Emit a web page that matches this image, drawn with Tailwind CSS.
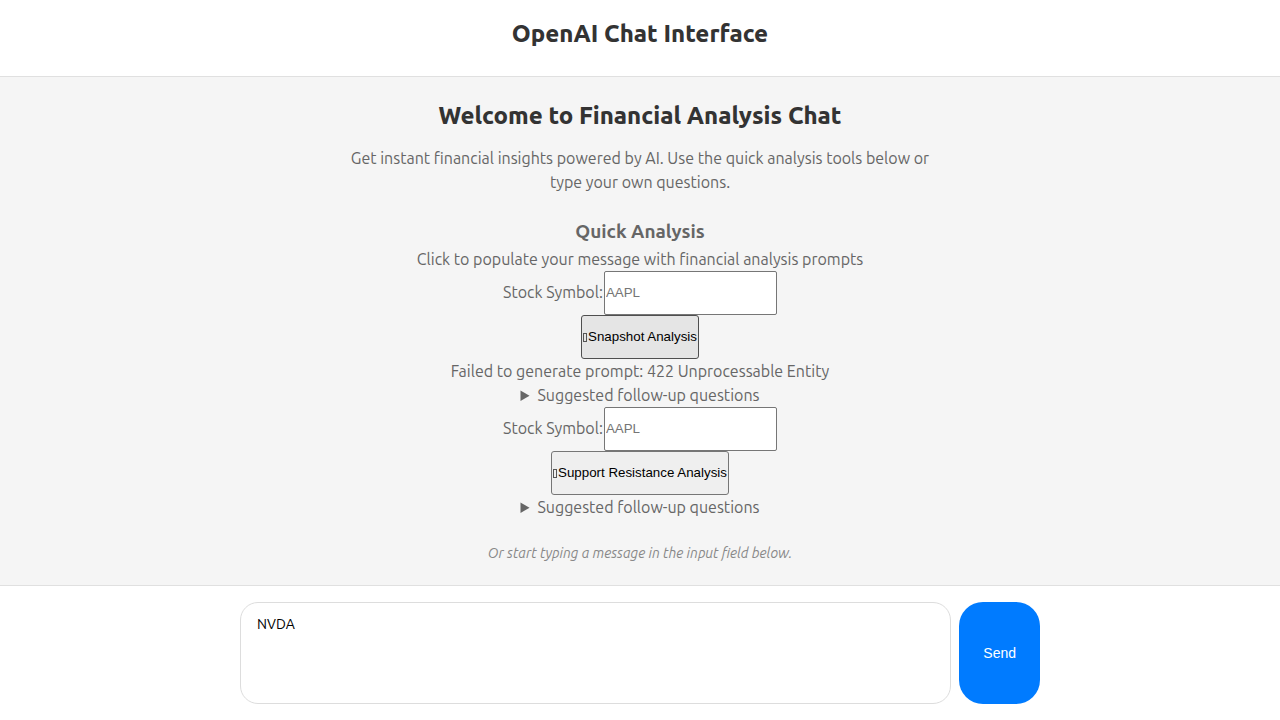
<!DOCTYPE html>
<html lang="en">
<head>
<meta charset="utf-8">
<meta name="viewport" content="width=device-width, initial-scale=1">
<title>OpenAI Chat Interface</title>
<script src="https://cdn.jsdelivr.net/npm/@tailwindcss/browser@4"></script>
</head>
<body class="flex min-h-screen flex-col bg-[#f5f5f5] font-[Ubuntu,'Noto_Sans',sans-serif] text-base text-[#666]">
  <header class="border-b border-[#e0e0e0] bg-white px-4 pt-4 pb-6 text-center">
    <h1 class="text-2xl/9 font-extrabold text-[#333]">OpenAI Chat Interface</h1>
  </header>

  <main class="flex flex-1 flex-col items-center px-4 pt-[21px] pb-5 text-center">
    <h2 class="text-2xl/9 font-extrabold text-[#333]">Welcome to Financial Analysis Chat</h2>
    <p class="mt-3 max-w-[600px]">Get instant financial insights powered by AI. Use the quick analysis tools below or type your own questions.</p>

    <section class="mt-6 flex flex-col items-center">
      <h3 class="pb-0.5 text-[19px]/[27px] font-bold">Quick Analysis</h3>
      <p>Click to populate your message with financial analysis prompts</p>

      <div class="flex items-center">
        <label for="snapshot-symbol" class="pr-px pb-0.5">Stock Symbol:</label>
        <input id="snapshot-symbol" type="text" placeholder="AAPL" class="h-11 w-[173px] rounded-[2px] border border-[#767676] bg-white px-px pb-0.5 font-['Liberation_Sans',sans-serif] text-[length:10pt] text-black placeholder:text-[#757575]">
      </div>
      <button type="button" class="flex h-11 items-center rounded-[3px] border border-[#4f4f4f] bg-[#e5e5e5] px-px font-['Liberation_Sans',sans-serif] text-[length:10pt] text-black">
        <span aria-hidden="true" class="mr-px h-[9px] w-1 border border-[#555]"></span>Snapshot Analysis
      </button>
      <p role="alert">Failed to generate prompt: 422 Unprocessable Entity</p>
      <details>
        <summary>Suggested follow-up questions</summary>
      </details>

      <div class="flex items-center">
        <label for="support-symbol" class="pr-px pb-0.5">Stock Symbol:</label>
        <input id="support-symbol" type="text" placeholder="AAPL" class="h-11 w-[173px] rounded-[2px] border border-[#767676] bg-white px-px pb-0.5 font-['Liberation_Sans',sans-serif] text-[length:10pt] text-black placeholder:text-[#757575]">
      </div>
      <button type="button" class="flex h-11 items-center rounded-[3px] border border-[#767676] bg-[#efefef] px-px font-['Liberation_Sans',sans-serif] text-[length:10pt] text-black">
        <span aria-hidden="true" class="mr-px h-[9px] w-1 border border-[#555]"></span>Support Resistance Analysis
      </button>
      <details>
        <summary>Suggested follow-up questions</summary>
      </details>
    </section>

    <p class="mt-6 text-[14px]/[21px] text-[#888] italic">Or start typing a message in the input field below.</p>
  </main>

  <footer class="border-t border-[#e0e0e0] bg-white p-4">
    <form class="mx-auto flex max-w-[800px] gap-2">
      <textarea aria-label="Message" class="h-[102px] min-w-0 flex-1 resize-none rounded-[18px] border border-[#ddd] bg-white px-4 py-[11px] text-[14px]/[21px] text-black">NVDA</textarea>
      <button type="button" class="rounded-3xl bg-[#007bff] px-6 font-['Liberation_Sans',sans-serif] text-[14px] text-white">Send</button>
    </form>
  </footer>
</body>
</html>
